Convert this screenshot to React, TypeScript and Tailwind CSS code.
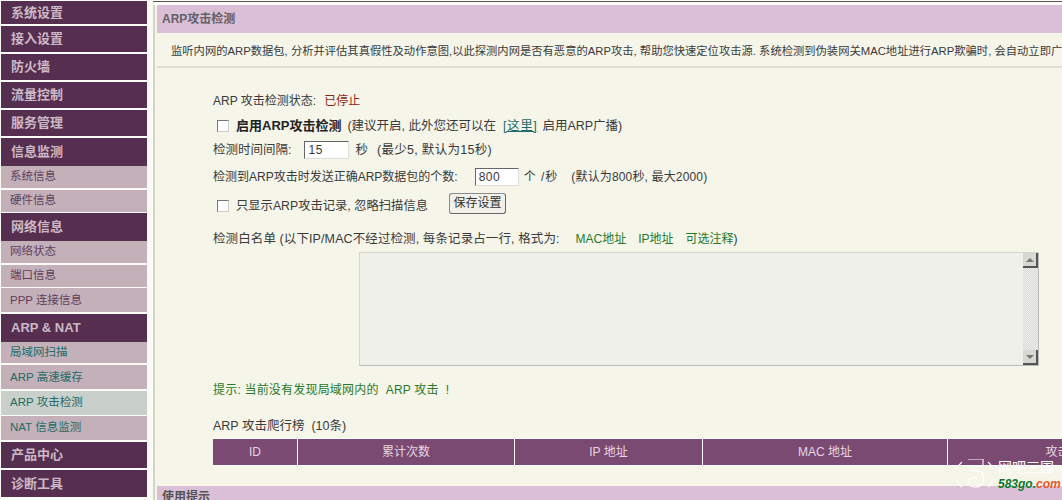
const font = "font-['Liberation_Sans','Noto_Sans_CJK_SC',sans-serif]";

const menu = [
  { label: "系统设置", h: "h-[23px] mb-[2px]", type: "head" },
  { label: "接入设置", h: "h-[26px] mb-[2px]", type: "head" },
  { label: "防火墙", h: "h-[26px] mb-[2px]", type: "head" },
  { label: "流量控制", h: "h-[26px] mb-[2px]", type: "head" },
  { label: "服务管理", h: "h-[26px] mb-[2px]", type: "head" },
  { label: "信息监测", h: "h-[28px]", type: "head" },
  { label: "系统信息", h: "h-[22px] mb-[2px]", type: "sub" },
  { label: "硬件信息", h: "h-[22px] mb-[1px]", type: "sub" },
  { label: "网络信息", h: "h-[28px]", type: "head" },
  { label: "网络状态", h: "h-[22px] mb-[2px]", type: "sub" },
  { label: "端口信息", h: "h-[22px] mb-[1px]", type: "sub" },
  { label: "PPP 连接信息", h: "h-[24px] mb-[2px] pt-[2px]", type: "sub" },
  { label: "ARP & NAT", h: "h-[28px]", type: "head" },
  { label: "局域网扫描", h: "h-[21px] mb-[2px]", type: "link" },
  { label: "ARP 高速缓存", h: "h-[24px] mb-[2px] pt-[2px]", type: "link" },
  { label: "ARP 攻击检测", h: "h-[24px] mb-[1px]", type: "active" },
  { label: "NAT 信息监测", h: "h-[24px] mb-[2px]", type: "link" },
  { label: "产品中心", h: "h-[26px] mb-[2px]", type: "head" },
  { label: "诊断工具", h: "h-[27px]", type: "head" },
];

const columns = [
  { label: "ID", w: "w-[85px]" },
  { label: "累计次数", w: "w-[217px]" },
  { label: "IP 地址", w: "w-[188px]" },
  { label: "MAC 地址", w: "w-[245px]" },
  { label: "攻击", w: "w-[220px]" },
];

function MenuItem({ item }: { item: (typeof menu)[number] }) {
  if (item.type === "head") {
    return (
      <div className={`${item.h} flex items-center bg-[#562f50] pl-[10px] text-[13px] font-bold text-[#cdb9c6]`}>
        {item.label}
      </div>
    );
  }
  const color =
    item.type === "active"
      ? "bg-[#c9cfcb] text-[#1d6b68]"
      : item.type === "link"
        ? "bg-[#c4b0b8] text-[#1d6b68]"
        : "bg-[#c4b0b8] text-[#5f3f5a]";
  return <div className={`${item.h} flex items-center pl-[9px] text-[11.5px] ${color}`}>{item.label}</div>;
}

function Checkbox() {
  return <span className="h-[12px] w-[12px] shrink-0 border border-[#777] border-r-[#ccc] border-b-[#ccc] bg-white" />;
}

function Field({ value, w }: { value: string; w: string }) {
  return (
    <span className={`${w} flex h-[18px] shrink-0 items-center border border-[#666] border-r-[#ddd] border-b-[#ddd] bg-white pl-[3px] text-[12px] tracking-[0.5px]`}>
      {value}
    </span>
  );
}

function Scrollbar() {
  return (
    <div className="flex w-[15px] flex-col justify-between bg-[repeating-conic-gradient(#d6d6d2_0_25%,#f2f2ee_0_50%)] bg-[length:2px_2px]">
      <div className="flex h-[15px] items-center justify-center border-r-2 border-b-2 border-[#555] bg-[#d8d8d2]">
        <span className="h-0 w-0 border-x-[4px] border-b-[4px] border-x-transparent border-b-[#777]" />
      </div>
      <div className="flex h-[15px] items-center justify-center border-r-2 border-b-2 border-[#555] bg-[#d8d8d2]">
        <span className="h-0 w-0 border-x-[4px] border-t-[4px] border-x-transparent border-t-[#777]" />
      </div>
    </div>
  );
}

function Watermark() {
  return (
    <div className="absolute top-[459px] left-[957px] flex items-start gap-[5px]">
      <svg width="36" height="31" viewBox="0 0 36 31" fill="none" stroke="#fff" strokeWidth="1.1">
        <path d="M5 3 A16 16 0 0 0 5 28" />
        <path d="M31 3 A16 16 0 0 1 31 28" />
        <path d="M11 0 H26 V7 H15 V12 Q26 10 27 19 Q26 29 17 28 Q11 27 11 21 Q15 17 20 20" />
      </svg>
      <div className="flex flex-col">
        <span className="text-[14px] leading-[16px] text-white">网吧三国</span>
        <span className="mt-[3px] text-[12px] leading-[13px] font-bold italic text-[#0c7a2c]">
          583go.<span className="text-[#e4572a]">com</span>
        </span>
      </div>
    </div>
  );
}

export default function App() {
  return (
    <div className={`${font} relative flex h-[500px] w-[1062px] overflow-hidden bg-[#fbfbf6] text-[12px] text-[#3a3a3a]`}>
      <aside className="mt-[1px] ml-[1px] flex w-[146px] shrink-0 flex-col">
        {menu.map((item) => (
          <MenuItem key={item.label} item={item} />
        ))}
      </aside>

      <main className="mt-[1px] ml-[6px] flex min-w-0 flex-1 flex-col overflow-hidden border-t border-t-[#555] pt-[3px]">
        <div className="flex flex-1 flex-col border-l-2 border-[#d4d4c4] bg-[#f5f5ea] pl-[2px]">
          <h2 className="flex h-[28px] shrink-0 items-center bg-[#dabfd7] pl-[5px] text-[12px] font-bold text-[#655f66]">
            ARP攻击检测
          </h2>
          <p className="flex h-[35px] shrink-0 items-center overflow-hidden border-b-2 border-[#deded0] pt-[4px] pl-[14px] text-[11.3px] whitespace-nowrap">
            监听内网的ARP数据包, 分析并评估其真假性及动作意图,以此探测内网是否有恶意的ARP攻击, 帮助您快速定位攻击源. 系统检测到伪装网关MAC地址进行ARP欺骗时, 会自动立即广
          </p>

          <section className="flex flex-col pl-[56px] whitespace-nowrap">
            <div className="mt-[24px] flex h-[18px] items-center">
              ARP 攻击检测状态:<span className="ml-[8px] text-[#8c2418]">已停止</span>
            </div>
            <div className="mt-[7px] flex h-[18px] items-center pl-[4px] text-[12.5px]">
              <Checkbox />
              <b className="ml-[7px] text-[13px] text-[#222]">启用ARP攻击检测</b>
              <span className="ml-[6px]">(建议开启, 此外您还可以在</span>
              <span className="ml-[7px] tracking-[0.6px] text-[#1d6b68] underline">[这里]</span>
              <span className="ml-[5px]">启用ARP广播)</span>
            </div>
            <div className="mt-[5px] flex h-[20px] items-center text-[12.5px]">
              检测时间间隔:
              <span className="ml-[13px]"><Field value="15" w="w-[45px]" /></span>
              <span className="ml-[6px]">秒</span>
              <span className="ml-[9px] tracking-[0.3px]">(最少5, 默认为15秒)</span>
            </div>
            <div className="mt-[7px] flex h-[20px] items-center">
              检测到ARP攻击时发送正确ARP数据包的个数:
              <span className="ml-[17px]"><Field value="800" w="w-[44px]" /></span>
              <span className="ml-[5px] tracking-[1px]">个 /秒</span>
              <span className="ml-[13px] tracking-[0.15px]">(默认为800秒, 最大2000)</span>
            </div>
            <div className="mt-[7px] flex h-[24px] items-center pl-[4px]">
              <Checkbox />
              <span className="ml-[7px] text-[12.3px]">只显示ARP攻击记录, 忽略扫描信息</span>
              <button className="-mt-[6px] ml-[21px] h-[21px] w-[57px] rounded-[3px] border border-[#8a8a8a] border-r-[#666] border-b-[#666] bg-[#f1f1ea] text-[12px] text-[#333]">
                保存设置
              </button>
            </div>
            <div className="mt-[12px] flex h-[18px] items-center">
              <span className="text-[12.5px] tracking-[0.1px]">检测白名单 (以下IP/MAC不经过检测, 每条记录占一行, 格式为:</span>
              <span className="ml-[16px] text-[#287a2a]">MAC地址</span>
              <span className="ml-[12px] text-[#287a2a]">IP地址</span>
              <span className="ml-[12px] text-[#287a2a]">可选注释</span>)
            </div>
            <div className="mt-[4px] ml-[146px] flex h-[114px] w-[680px] border border-[#d6d6c8] border-r-[#bbb] border-b-[#bbb] bg-[#f0f0ea]">
              <div className="flex-1" />
              <Scrollbar />
            </div>
            <div className="mt-[15px] flex h-[18px] items-center tracking-[0.2px] text-[#287a2a]">
              提示: 当前没有发现局域网内的&nbsp;&nbsp;ARP 攻击&nbsp;&nbsp;!
            </div>
            <div className="mt-[18px] flex h-[18px] items-center text-[12.5px]">ARP 攻击爬行榜 &nbsp;(10条)</div>
            <div className="mt-[3px] flex h-[28px] border-y border-[#fff]">
              {columns.map((col) => (
                <div
                  key={col.label}
                  className={`${col.w} flex shrink-0 items-center justify-center border-r border-white bg-[#7a4a73] text-[#e6d6e2]`}
                >
                  {col.label}
                </div>
              ))}
            </div>
          </section>

          <div className="mt-[20px] flex h-[28px] shrink-0 items-start bg-[#dabfd7] pt-[2px] pl-[5px] font-bold text-[#555]">
            使用提示
          </div>
        </div>
      </main>

      <Watermark />
    </div>
  );
}
